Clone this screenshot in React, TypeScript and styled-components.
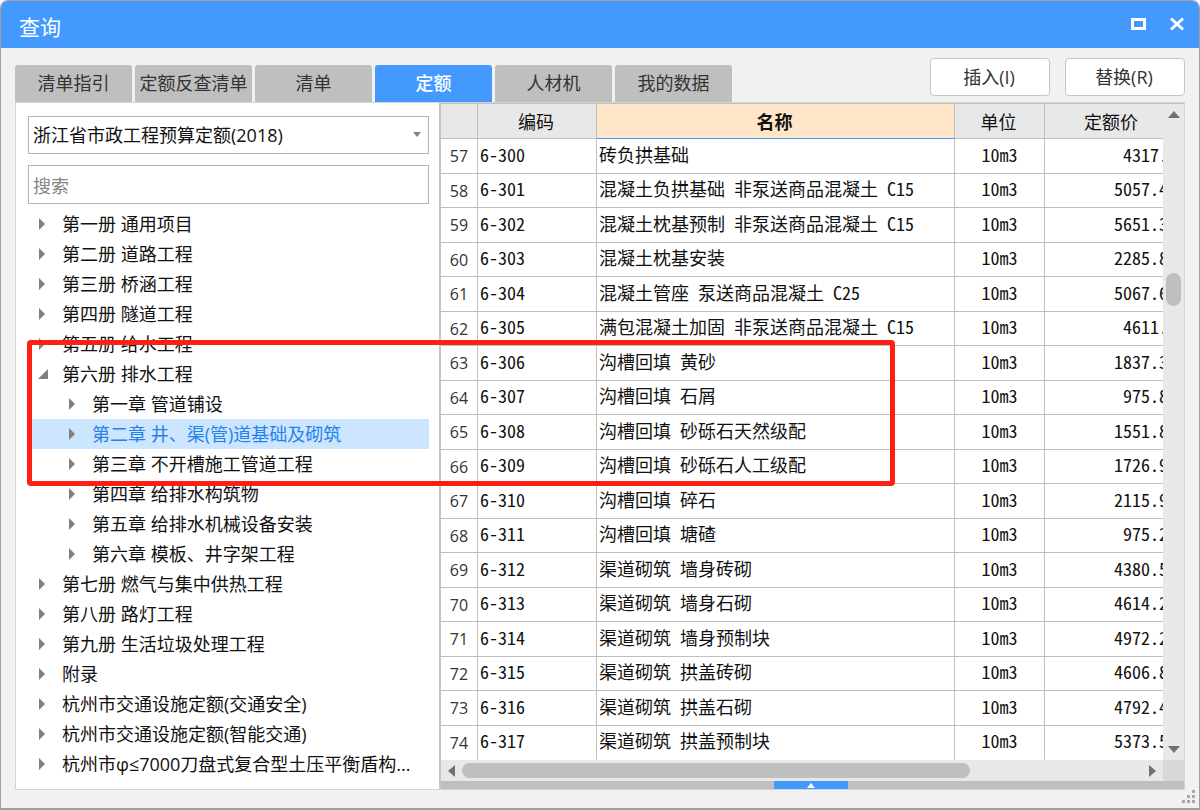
import React, { useState } from "react";
import styled, { createGlobalStyle } from "styled-components";

const GlobalStyle = createGlobalStyle`
  *, *::before, *::after { box-sizing: border-box; }
  body {
    margin: 0;
    background: #fff;
    font-family: "Open Sans", "Noto Sans CJK SC", sans-serif;
    font-size: 18px;
    line-height: 24px;
    color: #111;
  }
  button, input, select { font: inherit; color: inherit; margin: 0; }
`;

const Window = styled.main`
  position: relative;
  display: flex;
  flex-direction: column;
  min-height: 100vh;
  border: 1px solid #a0a0a0;
  border-bottom-width: 2px;
  border-radius: 8px 8px 0 0;
  background: #f1f1f1;
  overflow: hidden;
`;

const TitleBar = styled.header`
  display: flex;
  align-items: center;
  justify-content: space-between;
  height: 47px;
  padding: 4px 14px 0 18px;
  background: #4499ff;
  color: #fff;
`;

const Title = styled.h1`
  margin: 0;
  font-size: 21px;
  line-height: 24px;
  font-weight: 400;
`;

const WindowControls = styled.div`
  display: flex;
  gap: 20px;
`;

const ControlButton = styled.button`
  display: flex;
  padding: 0 0 6px;
  border: 0;
  background: none;
  cursor: pointer;
`;

const Toolbar = styled.div`
  display: flex;
  justify-content: space-between;
  height: 54px;
  padding: 0 14px;
`;

const Tabs = styled.div`
  display: flex;
  align-items: flex-end;
  gap: 3px;
`;

const Tab = styled.button<{ $active: boolean }>`
  width: 117px;
  height: 37px;
  padding: 0 0 2px;
  border: 0;
  border-radius: 3px 3px 0 0;
  background: ${(p) => (p.$active ? "#4499ff" : "#bfbfbf")};
  color: ${(p) => (p.$active ? "#fff" : "#333")};
  font-weight: ${(p) => (p.$active ? 500 : 400)};
  white-space: nowrap;
  cursor: pointer;
`;

const Actions = styled.div`
  display: flex;
  gap: 15px;
  padding-top: 10px;
`;

const ActionButton = styled.button`
  width: 120px;
  height: 38px;
  padding: 0 2px 0 0;
  border: 1px solid #c6c6c6;
  border-radius: 4px;
  background: #fff;
  color: #333;
  cursor: pointer;
`;

const Panel = styled.div`
  display: flex;
  flex: 1;
  margin: 0 14px;
  border: 1px solid #d4d4d4;
  background: #fff;
`;

const Sidebar = styled.aside`
  flex: none;
  width: 423px;
  padding: 13px 10px 0 12px;
`;

const SelectWrap = styled.label`
  display: flex;
  position: relative;
  margin-bottom: 11px;
`;

const LibrarySelect = styled.select`
  width: 100%;
  height: 38px;
  padding: 0 28px 0 4px;
  border: 1px solid #b4b4b4;
  border-radius: 0;
  appearance: none;
  background: #fff;
`;

const SelectArrow = styled.svg`
  position: absolute;
  right: 8px;
  top: 16px;
  pointer-events: none;
`;

const SearchInput = styled.input`
  display: block;
  width: 100%;
  height: 39px;
  padding: 2px 4px 0;
  border: 1px solid #b4b4b4;
  border-radius: 0;
  outline: 0;
  &::placeholder { color: #858585; opacity: 1; }
`;

const Tree = styled.ul`
  margin: 5px 0 0;
  padding: 0;
  list-style: none;
`;

const TreeItem = styled.button<{ $level: number; $selected: boolean }>`
  display: flex;
  align-items: center;
  width: 100%;
  height: 30px;
  padding: 0 0 0 ${(p) => 10 + p.$level * 30}px;
  border: 0;
  background: ${(p) => (p.$selected ? "#cce6ff" : "transparent")};
  color: ${(p) => (p.$selected ? "#2680eb" : "#111")};
  white-space: nowrap;
  cursor: pointer;
`;

const TreeArrow = styled.svg`
  flex: none;
  margin-right: 14px;
`;

const GridPane = styled.section`
  display: flex;
  flex: 1;
  flex-direction: column;
  min-width: 0;
  border-top: 1px solid #bfbfbf;
  border-left: 2px solid #c6c6c6;
`;

const GridBody = styled.div`
  display: flex;
  flex: 1;
`;

const TableClip = styled.div`
  flex: 1;
  min-width: 0;
  overflow: hidden;
`;

const Table = styled.table`
  width: calc(100% + 17px);
  border-collapse: separate;
  border-spacing: 0;
  table-layout: fixed;
  font-family: "Noto Sans CJK SC", sans-serif;
  font-feature-settings: "hwid" 1;
`;

const Col = styled.col<{ $width?: number }>`
  width: ${(p) => (p.$width ? `${p.$width}px` : "auto")};
`;

const HeadCell = styled.th<{ $current?: boolean }>`
  height: 35px;
  padding: 0 2px 0 0;
  border-right: 1px solid #bfbfbf;
  border-bottom: 1px solid ${(p) => (p.$current ? "#4499ff" : "#bfbfbf")};
  background: ${(p) => (p.$current ? "#ffe6c8" : "#e8e8e8")};
  font-weight: ${(p) => (p.$current ? 700 : 400)};
`;

const Row = styled.tr`
  height: 35px;
  &:nth-child(even) { height: 34px; }
  &:last-child td { border-bottom-color: transparent; }
`;

const Cell = styled.td<{ $align?: "center" | "right" }>`
  padding: 0 ${(p) => (p.$align === "right" ? 11 : 2)}px 5px 2px;
  border-right: 1px solid #bfbfbf;
  border-bottom: 1px solid #bfbfbf;
  text-align: ${(p) => p.$align ?? "left"};
  white-space: nowrap;
`;

const NumberCell = styled(Cell)`
  padding: 0;
  font-family: "Open Sans", sans-serif;
  font-size: 16px;
  color: #333;
`;

const Track = styled.div<{ $vertical?: boolean }>`
  display: flex;
  flex-direction: ${(p) => (p.$vertical ? "column" : "row")};
  align-items: center;
  flex: ${(p) => (p.$vertical ? "none" : "1")};
  width: ${(p) => (p.$vertical ? "21px" : "auto")};
  padding: ${(p) => (p.$vertical ? "7px 0" : "0 7px")};
  background: #e8e8e8;
`;

const Spacer = styled.div<{ $grow: number }>`
  flex: ${(p) => p.$grow} 0 0;
`;

const VerticalThumb = styled.div`
  width: 15px;
  height: 33px;
  border-radius: 8px;
  background: #bfbfbf;
`;

const HorizontalThumb = styled.div`
  flex: 509 0 0;
  height: 15px;
  border-radius: 8px;
  background: #bfbfbf;
`;

const BottomScroll = styled.div`
  display: flex;
  height: 21px;
`;

const Corner = styled.div`
  width: 21px;
  background: #d8d8d8;
`;

const Splitter = styled.div`
  display: flex;
  justify-content: center;
  height: 8px;
  padding-right: 4px;
  background: #bfbfbf;
`;

const SplitterHandle = styled.button`
  display: flex;
  align-items: center;
  justify-content: center;
  width: 74px;
  padding: 0;
  border: 0;
  background: #4499ff;
`;

const Footer = styled.footer`
  display: flex;
  justify-content: flex-end;
  height: 18px;
  padding: 0 4px;
`;

const Highlight = styled.div`
  position: absolute;
  left: 26px;
  top: 339px;
  width: 868px;
  height: 146px;
  border: 5px solid #ff2015;
  border-radius: 4px;
  pointer-events: none;
`;

const tabs = ["清单指引", "定额反查清单", "清单", "定额", "人材机", "我的数据"];

const tree: { label: string; level: number; open?: boolean }[] = [
  { label: "第一册 通用项目", level: 0 },
  { label: "第二册 道路工程", level: 0 },
  { label: "第三册 桥涵工程", level: 0 },
  { label: "第四册 隧道工程", level: 0 },
  { label: "第五册 给水工程", level: 0 },
  { label: "第六册 排水工程", level: 0, open: true },
  { label: "第一章 管道铺设", level: 1 },
  { label: "第二章 井、渠(管)道基础及砌筑", level: 1 },
  { label: "第三章 不开槽施工管道工程", level: 1 },
  { label: "第四章 给排水构筑物", level: 1 },
  { label: "第五章 给排水机械设备安装", level: 1 },
  { label: "第六章 模板、井字架工程", level: 1 },
  { label: "第七册 燃气与集中供热工程", level: 0 },
  { label: "第八册 路灯工程", level: 0 },
  { label: "第九册 生活垃圾处理工程", level: 0 },
  { label: "附录", level: 0 },
  { label: "杭州市交通设施定额(交通安全)", level: 0 },
  { label: "杭州市交通设施定额(智能交通)", level: 0 },
  { label: "杭州市φ≤7000刀盘式复合型土压平衡盾构...", level: 0 },
];

const rows: [number, string, string, string][] = [
  [57, "6-300", "砖负拱基础", "4317."],
  [58, "6-301", "混凝土负拱基础 非泵送商品混凝土 C15", "5057.4"],
  [59, "6-302", "混凝土枕基预制 非泵送商品混凝土 C15", "5651.3"],
  [60, "6-303", "混凝土枕基安装", "2285.8"],
  [61, "6-304", "混凝土管座 泵送商品混凝土 C25", "5067.6"],
  [62, "6-305", "满包混凝土加固 非泵送商品混凝土 C15", "4611."],
  [63, "6-306", "沟槽回填 黄砂", "1837.3"],
  [64, "6-307", "沟槽回填 石屑", "975.8"],
  [65, "6-308", "沟槽回填 砂砾石天然级配", "1551.8"],
  [66, "6-309", "沟槽回填 砂砾石人工级配", "1726.9"],
  [67, "6-310", "沟槽回填 碎石", "2115.9"],
  [68, "6-311", "沟槽回填 塘碴", "975.2"],
  [69, "6-312", "渠道砌筑 墙身砖砌", "4380.5"],
  [70, "6-313", "渠道砌筑 墙身石砌", "4614.2"],
  [71, "6-314", "渠道砌筑 墙身预制块", "4972.2"],
  [72, "6-315", "渠道砌筑 拱盖砖砌", "4606.8"],
  [73, "6-316", "渠道砌筑 拱盖石砌", "4792.4"],
  [74, "6-317", "渠道砌筑 拱盖预制块", "5373.5"],
];

const trianglePoints = {
  up: "0,7 6,0 12,7",
  down: "0,0 12,0 6,7",
  left: "7,0 0,6 7,12",
  right: "0,0 7,6 0,12",
};

function Triangle({ direction }: { direction: keyof typeof trianglePoints }) {
  const tall = direction === "left" || direction === "right";
  return (
    <svg width={tall ? 7 : 12} height={tall ? 12 : 7} aria-hidden="true">
      <polygon points={trianglePoints[direction]} fill="#707078" />
    </svg>
  );
}

export default function App() {
  const [activeTab, setActiveTab] = useState("定额");
  const [selected, setSelected] = useState(7);

  return (
    <>
      <GlobalStyle />
      <Window>
        <TitleBar>
          <Title>查询</Title>
          <WindowControls>
            <ControlButton aria-label="最大化">
              <svg width="20" height="14" viewBox="0 0 20 14">
                <rect x="3.5" y="2.5" width="12" height="9" fill="none" stroke="#fff" strokeWidth="3" />
              </svg>
            </ControlButton>
            <ControlButton aria-label="关闭">
              <svg width="16" height="14" viewBox="0 0 16 14">
                <path d="M2 1.5 14 12.5M14 1.5 2 12.5" stroke="#fff" strokeWidth="3" />
              </svg>
            </ControlButton>
          </WindowControls>
        </TitleBar>

        <Toolbar>
          <Tabs role="tablist">
            {tabs.map((tab) => (
              <Tab
                key={tab}
                role="tab"
                aria-selected={tab === activeTab}
                $active={tab === activeTab}
                onClick={() => setActiveTab(tab)}
              >
                {tab}
              </Tab>
            ))}
          </Tabs>
          <Actions>
            <ActionButton>插入(I)</ActionButton>
            <ActionButton>替换(R)</ActionButton>
          </Actions>
        </Toolbar>

        <Panel>
          <Sidebar>
            <SelectWrap>
              <LibrarySelect aria-label="定额库">
                <option>浙江省市政工程预算定额(2018)</option>
              </LibrarySelect>
              <SelectArrow width="8" height="5" aria-hidden="true">
                <polygon points="0,0 8,0 4,5" fill="#808080" />
              </SelectArrow>
            </SelectWrap>
            <SearchInput type="text" placeholder="搜索" aria-label="搜索" />
            <Tree>
              {tree.map((node, i) => (
                <li key={node.label}>
                  <TreeItem $level={node.level} $selected={i === selected} onClick={() => setSelected(i)}>
                    <TreeArrow width="10" height="12" aria-hidden="true">
                      <polygon points={node.open ? "0,11 10,1 10,11" : "1,0 7,6 1,12"} fill="#808080" />
                    </TreeArrow>
                    {node.label}
                  </TreeItem>
                </li>
              ))}
            </Tree>
          </Sidebar>

          <GridPane>
            <GridBody>
              <TableClip>
                <Table>
                  <colgroup>
                    <Col $width={37} />
                    <Col $width={119} />
                    <Col />
                    <Col $width={90} />
                    <Col $width={135} />
                  </colgroup>
                  <thead>
                    <tr>
                      <HeadCell aria-label="序号" />
                      <HeadCell>编码</HeadCell>
                      <HeadCell $current>名称</HeadCell>
                      <HeadCell>单位</HeadCell>
                      <HeadCell>定额价</HeadCell>
                    </tr>
                  </thead>
                  <tbody>
                    {rows.map(([no, code, name, price]) => (
                      <Row key={no}>
                        <NumberCell $align="center">{no}</NumberCell>
                        <Cell>{code}</Cell>
                        <Cell>{name}</Cell>
                        <Cell $align="center">10m3</Cell>
                        <Cell $align="right">{price}</Cell>
                      </Row>
                    ))}
                  </tbody>
                </Table>
              </TableClip>
              <Track $vertical>
                <Triangle direction="up" />
                <Spacer $grow={156} />
                <VerticalThumb />
                <Spacer $grow={441} />
                <Triangle direction="down" />
              </Track>
            </GridBody>
            <BottomScroll>
              <Track>
                <Triangle direction="left" />
                <Spacer $grow={7} />
                <HorizontalThumb />
                <Spacer $grow={179} />
                <Triangle direction="right" />
              </Track>
              <Corner />
            </BottomScroll>
            <Splitter>
              <SplitterHandle aria-label="展开">
                <svg width="8" height="5">
                  <polygon points="0,5 4,0 8,5" fill="#fff" />
                </svg>
              </SplitterHandle>
            </Splitter>
          </GridPane>
        </Panel>

        <Footer>
          <svg width="13" height="13" aria-hidden="true" fill="#a8a8a8">
            <rect x="10" y="0" width="3" height="3" />
            <rect x="5" y="5" width="3" height="3" />
            <rect x="10" y="5" width="3" height="3" />
            <rect x="0" y="10" width="3" height="3" />
            <rect x="5" y="10" width="3" height="3" />
            <rect x="10" y="10" width="3" height="3" />
          </svg>
        </Footer>
        <Highlight />
      </Window>
    </>
  );
}
